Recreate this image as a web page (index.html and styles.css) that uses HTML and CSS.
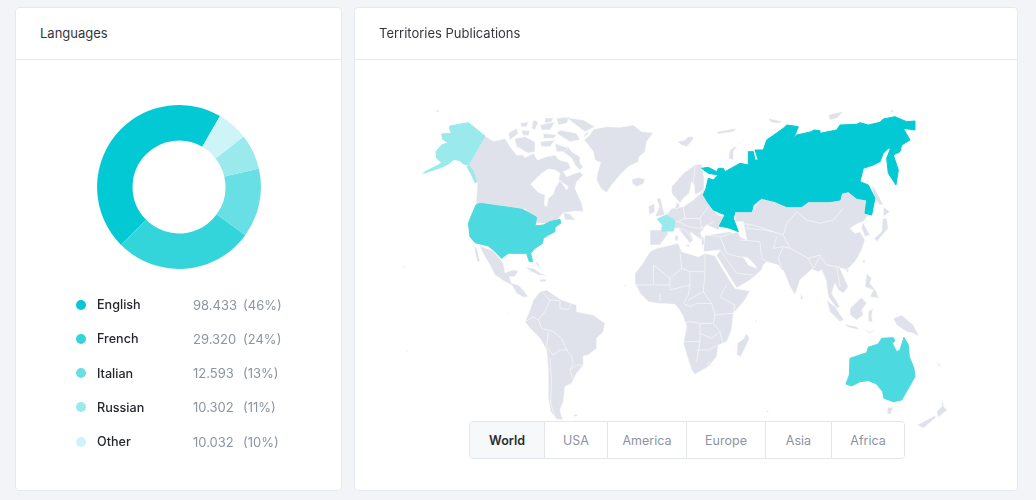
FILE: index.html
```html
<!DOCTYPE html>
<html lang="en">
<head>
<meta charset="utf-8">
<title>Languages and Territories</title>
<link rel="stylesheet" href="styles.css">
</head>
<body>
<main class="dashboard">
  <section class="card card-languages">
    <h2 class="card-title">Languages</h2>
    <div class="languages-body">
      <svg class="donut" viewBox="0 0 164 164" width="164" height="164">
        <g fill="none" stroke-width="35.5">
          <circle class="s1" cx="82" cy="82" r="64.2" pathLength="360" stroke-dasharray="165 360" transform="rotate(135 82 82)"/>
          <circle class="s2" cx="82" cy="82" r="64.2" pathLength="360" stroke-dasharray="99 360" transform="rotate(36 82 82)"/>
          <circle class="s3" cx="82" cy="82" r="64.2" pathLength="360" stroke-dasharray="49 360" transform="rotate(-13 82 82)"/>
          <circle class="s4" cx="82" cy="82" r="64.2" pathLength="360" stroke-dasharray="25 360" transform="rotate(-38 82 82)"/>
          <circle class="s5" cx="82" cy="82" r="64.2" pathLength="360" stroke-dasharray="22 360" transform="rotate(-60 82 82)"/>
        </g>
      </svg>
      <ul class="legend">
        <li class="legend-row"><span class="dot d1"></span><span class="lang">English</span><span class="num">98.433</span><span class="pct">(46%)</span></li>
        <li class="legend-row"><span class="dot d2"></span><span class="lang">French</span><span class="num">29.320</span><span class="pct">(24%)</span></li>
        <li class="legend-row"><span class="dot d3"></span><span class="lang">Italian</span><span class="num">12.593</span><span class="pct">(13%)</span></li>
        <li class="legend-row"><span class="dot d4"></span><span class="lang">Russian</span><span class="num">10.302</span><span class="pct">(11%)</span></li>
        <li class="legend-row"><span class="dot d5"></span><span class="lang">Other</span><span class="num">10.032</span><span class="pct">(10%)</span></li>
      </ul>
    </div>
  </section>
  <section class="card card-map">
    <h2 class="card-title">Territories Publications</h2>
    <div class="map-body">
      <svg class="map" viewBox="355 60 662 430" width="662" height="430">
        <!-- North America, arctic -->
        <g class="land" transform="translate(500 105) scale(.3333)">
          <polygon points="0,105 15,100 30,125 50,150 70,150 75,158 100,145 112,165 140,155 165,150 178,165 205,172 212,190 190,200 200,215 225,205 240,200 250,210 230,230 225,250 245,295 250,320 225,318 190,325 170,345 140,355 110,355 75,312 -72,300 -68,235 -96,180 -45,93 -20,108"/>
          <polygon points="178,125 205,125 215,140 240,155 240,175 250,185 240,195 225,180 215,160 195,145"/>
          <polygon points="45,100 75,95 105,110 105,140 85,145 60,130 50,125 45,110"/>
          <polygon points="25,85 50,70 55,85 30,105"/>
          <polygon points="60,55 85,50 80,65 65,65"/>
          <polygon points="65,75 90,78 85,92 68,90"/>
          <polygon points="100,45 115,50 105,75 95,70"/>
          <polygon points="135,40 160,38 155,50 135,55"/>
          <polygon points="120,60 165,50 150,75 125,75"/>
          <polygon points="170,40 210,35 200,55 175,60"/>
          <polygon points="200,38 250,45 285,65 255,80 235,65"/>
          <polygon points="180,75 230,85 240,105 210,110 185,95 170,85"/>
          <polygon points="120,110 165,105 150,125 125,125"/>
          <polygon points="165,115 205,130 190,140 170,140"/>
          <polygon points="130,85 170,90 160,100 130,100"/>
          <polygon points="255,85 270,80 250,100"/>
          <polygon class="water" points="92,238 125,205 145,192 165,195 180,205 175,225 205,245 200,255 180,225 165,250 160,268 145,280 140,305 133,300 135,270 115,262"/>
          <polygon class="water" points="170,346 190,330 235,322 250,340 215,345 195,350"/>
          <polygon points="190,322 212,328 225,345 195,345"/>
        </g>
        <g class="land" transform="translate(380 90) scale(.3333)">
          <polygon points="612,150 630,135 640,118 680,110 720,112 760,105 785,125 820,128 800,155 795,185 778,200 775,215 745,230 720,255 695,285 680,308 662,295 650,270 652,250 662,218 645,210 640,185 625,165"/>
          <polygon points="755,268 775,262 795,268 790,282 770,290 758,282"/>
          <polygon points="892,155 915,150 925,140 942,140 935,155 920,170 905,165"/>
          <polygon points="168,60 178,60 176,66 170,66"/>
          <polygon points="68,526 78,532 70,534"/>
          <polygon class="hi3" points="210,108 265,98 315,138 265,225 250,222 240,212 222,208 205,222 185,232 130,250 135,245 175,225 185,218 170,205 168,185 185,165 205,158 188,148 185,132 215,130 208,115"/>
          <polygon class="hi3" points="265,225 278,240 290,275 285,278 275,255 262,232"/>
          <polygon class="hi2" points="288,345 300,340 428,358 470,382 465,408 490,405 510,395 540,388 542,400 525,412 525,425 505,435 490,445 488,460 465,475 452,490 458,515 448,515 440,490 415,490 385,490 365,505 345,485 325,468 285,458 270,440 265,400 275,375"/>
        </g>
        <!-- Central America -->
        <g class="land" transform="translate(470 240) scale(.3333)">
          <polygon points="12,12 22,30 30,65 22,65 15,35"/>
          <polygon points="28,18 70,32 85,50 100,70 105,98 122,92 130,90 145,92 135,110 118,110 125,130 145,135 160,150 175,170 160,172 140,160 125,135 100,122 75,105 60,75 45,50"/>
          <polygon points="165,82 190,85 212,100 235,108 205,105 185,95"/>
          <polygon points="208,118 228,118 228,125 210,125"/>
          <polygon points="195,60 205,70 212,88 202,78"/>
        </g>
        <!-- South America -->
        <g class="land" transform="translate(380 270) scale(.3333)">
          <polygon points="480,65 500,60 545,90 590,105 590,125 640,135 675,160 670,185 650,205 650,235 625,255 610,258 610,285 590,310 575,340 555,350 550,395 540,420 548,450 530,448 512,425 505,385 505,300 500,240 480,205 450,175 435,155 450,120 460,90"/>
          <polygon points="580,435 595,432 592,438 582,440"/>
          <polygon points="76,240 85,242 80,246"/>
          <polygon points="380,128 386,128 384,132"/>
          <g class="borders">
            <polyline points="490,70 510,90 495,125 475,150 485,175 505,180 520,185 545,205 560,240 575,260 580,280 570,300 578,325"/>
            <polyline points="505,185 500,230 520,255 540,240 565,240"/>
            <polyline points="510,265 515,330 512,400 525,440"/>
            <polyline points="435,155 460,140 475,150"/>
            <polyline points="510,90 540,92 540,115 565,120 575,100"/>
            <polyline points="570,300 590,285 610,285"/>
          </g>
        </g>
        <!-- Africa -->
        <g class="land" transform="translate(620 235) scale(.3333)">
          <polygon points="90,50 110,40 175,25 185,50 235,65 255,55 285,62 295,80 325,130 345,160 390,168 375,195 340,235 335,285 320,320 295,330 290,365 265,395 225,418 215,405 205,375 190,325 200,275 190,245 175,220 165,208 110,205 85,200 60,175 45,145 45,115 65,90"/>
          <polygon points="380,295 388,310 375,340 362,365 350,360 352,325 370,312"/>
          <polygon points="15,148 20,152 14,155"/>
          <polygon points="405,255 412,258 408,262"/>
          <g class="borders">
            <polyline points="100,90 150,130 185,100 180,50"/>
            <polyline points="100,90 100,150 45,150"/>
            <polyline points="185,100 210,110 255,110 255,55"/>
            <polyline points="210,110 210,150 150,165 150,130"/>
            <polyline points="255,110 250,170 275,205 230,205 210,215 190,205 205,180 210,150"/>
            <polyline points="250,170 205,195"/>
            <polyline points="105,150 150,150"/>
            <polyline points="120,175 120,200"/>
            <polyline points="320,150 300,185 345,210 340,235"/>
            <polyline points="275,205 285,240 280,265 240,265 210,260 195,265"/>
            <polyline points="285,240 340,235"/>
            <polyline points="240,265 240,320 190,320"/>
            <polyline points="240,320 230,380"/>
            <polyline points="240,295 275,310 300,290 280,265"/>
            <polyline points="300,290 310,330"/>
            <polyline points="230,345 270,345 290,330"/>
            <polygon points="262,388 270,382 278,388 270,395"/>
          </g>
        </g>
        <!-- Europe -->
        <g class="land" transform="translate(630 150) scale(.3333)">
          <polygon points="125,110 160,70 195,45 215,42 222,80 222,120 195,135 192,105 185,95 178,130 160,145 150,160 138,145 125,130"/>
          <polygon points="80,145 92,145 100,180 105,195 75,200 88,170"/>
          <polygon points="55,170 72,160 75,185 58,195"/>
          <polygon points="60,240 110,240 115,250 90,285 60,285"/>
          <polygon points="110,195 125,175 160,170 190,150 222,120 240,170 265,195 290,200 275,225 265,240 230,225 210,250 240,285 215,270 180,245 190,270 165,250 145,235 132,235 135,212"/>
          <polygon points="140,155 150,165 145,175 135,175"/>
          <polygon points="145,235 165,240 190,270 180,280 160,255"/>
          <polygon points="235,255 300,245 330,260 330,280 290,285 240,285"/>
          <polygon points="215,255 228,285 215,285"/>
          <polygon points="135,255 145,258 143,272 135,272"/>
          <polygon points="165,284 180,284 175,292"/>
          <g class="borders">
            <polyline points="160,170 165,205 145,215 135,212"/>
            <polyline points="165,205 210,205 235,170"/>
            <polyline points="210,205 215,235 250,215"/>
            <polyline points="145,215 175,230 215,235"/>
            <polyline points="195,48 190,100"/>
          </g>
          <polygon class="hi3" points="82,207 110,195 135,212 132,235 130,243 95,243 97,225"/>
        </g>
        <!-- Asia -->
        <g class="land" transform="translate(740 190) scale(.3333)">
          <polygon points="-15,65 35,65 65,25 105,35 140,50 185,50 205,35 245,35 270,35 300,30 305,10 325,5 350,25 380,30 375,70 385,75 370,95 355,100 330,115 345,130 360,125 375,150 365,180 345,215 320,240 300,235 325,290 310,310 295,300 285,280 275,310 300,350 290,355 265,320 258,270 245,240 235,245 215,238 180,270 165,315 150,290 130,240 125,240 115,225 80,215 70,225 65,240 30,270 -10,294 -70,197 -60,180 -110,185 -105,135 -60,140 -5,125 -15,95"/>
          <polygon class="water" points="-15,95 10,95 20,150 0,140 -5,125"/>
          <polygon class="water" points="10,200 25,225 50,235 45,225 25,205"/>
          <polygon points="368,95 390,135 375,140 365,115"/>
          <polygon points="440,85 445,115 410,155 403,145 425,125 428,85"/>
          <polygon points="430,50 450,65 430,80"/>
          <polygon points="372,205 376,220 368,218"/>
          <polygon points="315,238 328,238 322,248"/>
          <g class="borders">
            <polyline points="170,65 200,90 240,100 280,90 310,55"/>
            <polyline points="170,65 140,100 130,135 150,175 205,205 240,195 260,225 290,230 320,240"/>
            <polyline points="0,100 40,105 100,125 130,135"/>
            <polyline points="30,100 20,115 70,120 100,125"/>
            <polyline points="0,150 60,155 65,205 80,215"/>
            <polyline points="110,140 100,175 130,170 150,175"/>
            <polyline points="130,170 115,205 125,235"/>
            <polyline points="205,205 220,235 240,200"/>
            <polyline points="245,240 258,270"/>
            <polyline points="290,230 300,290"/>
            <polyline points="-60,140 -40,190 -5,200 25,205"/>
            <polyline points="-60,180 -10,250 40,255"/>
          </g>
        </g>
        <!-- Russia and the north -->
        <g class="land" transform="translate(680 90) scale(.3333)">
          <polygon points="195,148 175,160 160,185 160,210 145,205 150,180"/>
          <polygon points="265,85 310,95 290,100 270,95"/>
          <polygon points="445,75 470,68 490,65 470,85 450,90"/>
          <polygon points="110,125 170,115 160,125 115,132"/>
          <polygon points="630,60 645,62 635,68"/>
          <polygon points="720,125 732,125 726,129"/>
          <polygon points="575,285 590,305 610,345 600,345 580,320"/>
          <polygon class="hi1" points="65,235 85,232 110,245 115,235 130,235 135,245 180,220 205,225 205,185 220,185 225,210 235,210 225,180 250,180 260,150 310,115 320,105 355,110 345,135 335,148 350,135 395,125 400,120 420,122 420,130 470,120 480,105 530,103 540,98 565,105 600,97 610,87 645,80 680,95 705,93 705,120 670,115 690,150 665,165 660,185 640,195 655,240 648,285 625,250 620,205 632,175 625,175 610,190 600,215 580,225 550,235 540,275 565,285 585,325 575,375 555,370 560,330 530,325 505,305 485,310 480,330 450,335 425,335 385,335 365,350 320,350 285,335 245,325 220,345 215,365 165,365 160,385 175,425 150,415 118,408 135,375 100,360 85,340 70,315 78,295 85,265 100,270 115,255 85,250"/>
        </g>
        <!-- South East Asia and Oceania -->
        <g class="land" transform="translate(680 270) scale(.3333)">
          <polygon points="440,90 465,110 492,150 480,155 450,125"/>
          <polygon points="490,162 530,170 538,180 505,172"/>
          <polygon points="510,115 545,82 560,100 545,120 550,135 530,150 510,135"/>
          <polygon points="565,125 580,115 575,135 578,155 565,155"/>
          <polygon points="560,10 575,25 570,40 590,65 595,85 570,80 580,60 555,50"/>
          <polygon points="640,145 665,135 700,165 718,200 700,190 680,185 650,165"/>
          <polygon points="550,178 570,185 590,180 570,190"/>
          <polygon points="785,385 792,410 802,420 775,442 770,425 785,410"/>
          <polygon points="768,435 765,445 730,475 712,465 740,450"/>
          <polygon points="622,412 640,412 632,432 622,432"/>
          <polygon points="362,70 370,85 362,90"/>
          <polygon points="772,275 785,290 775,288"/>
          <polygon points="258,420 268,424 262,428"/>
          <polygon class="hi2" points="510,265 560,248 565,232 595,222 605,205 640,203 645,212 637,220 650,245 660,240 672,202 685,225 688,260 702,295 705,320 688,350 665,390 640,395 612,385 608,365 590,342 565,332 540,335 515,348 498,342 508,315"/>
        </g>
      </svg>
      <div class="region-tabs">
        <button class="tab tab-active" type="button">World</button>
        <button class="tab" type="button">USA</button>
        <button class="tab" type="button">America</button>
        <button class="tab" type="button">Europe</button>
        <button class="tab" type="button">Asia</button>
        <button class="tab" type="button">Africa</button>
      </div>
    </div>
  </section>
</main>
</body>
</html>
```

FILE: styles.css
```css
* { box-sizing: border-box; }
html, body { margin: 0; height: 100%; }
body {
  background: #f3f4f8;
  font-family: Inter, "Liberation Sans", sans-serif;
  overflow: hidden;
}
.dashboard {
  display: flex;
  gap: 12px;
  padding: 7px 18px 9px 15px;
  height: 500px;
  filter: blur(.4px);
}
.card {
  background: #fff;
  border: 1px solid #e7e9f0;
  border-radius: 4px;
  display: flex;
  flex-direction: column;
}
.card-languages { width: 327px; }
.card-map { width: 664px; }
.card-title {
  margin: 0;
  height: 52px;
  padding: 0 24px 2px;
  display: flex;
  align-items: center;
  font-size: 13px;
  font-weight: 400;
  color: #33363b;
  border-bottom: 1px solid #e7e9f0;
}
.languages-body {
  display: flex;
  flex-direction: column;
  align-items: center;
  padding-top: 45px;
}
.donut { display: block; }
.s1 { stroke: #03c9d4; }
.s2 { stroke: #34d4db; }
.s3 { stroke: #68dfe5; }
.s4 { stroke: #9ae9ec; }
.s5 { stroke: #cdf4f6; }
.legend {
  list-style: none;
  margin: 18.4px 0 0;
  padding: 0 0 0 60px;
  width: 100%;
  font-size: 13px;
}
.legend-row {
  display: flex;
  align-items: center;
  height: 34.3px;
}
.dot {
  width: 10px;
  height: 10px;
  border-radius: 50%;
  margin-right: 11px;
}
.d1 { background: #03c9d4; }
.d2 { background: #34d4db; }
.d3 { background: #68dfe5; }
.d4 { background: #9ae9ec; }
.d5 { background: #cdf4f6; }
.lang { width: 96px; color: #24272b; font-weight: 500; font-size: 12.6px; }
.num { width: 50px; color: #8c94a1; }
.pct { color: #8c94a1; }
.map-body {
  position: relative;
  flex: 1;
}
.map { display: block; }
.land polygon {
  fill: #dfe2ea;
  stroke: #fff;
  stroke-width: .5;
  stroke-linejoin: round;
  vector-effect: non-scaling-stroke;
}
.land polygon.water { fill: #fff; stroke: #fff; }
.land polygon.hi1 { fill: #03c9d5; stroke: #03c9d5; stroke-width: 1; }
.land polygon.hi2 { fill: #4dd9e0; stroke: #4dd9e0; stroke-width: 1; }
.land polygon.hi3 { fill: #99e9ed; stroke: #99e9ed; stroke-width: 1; }
.borders polyline, .land .borders polygon {
  fill: none;
  stroke: #f5f6f9;
  stroke-width: .8;
  stroke-linejoin: round;
  vector-effect: non-scaling-stroke;
}
.region-tabs {
  position: absolute;
  left: 114px;
  bottom: 31px;
  display: grid;
  grid-template-columns: 74px 63px 79px 79px 66px 73px;
  height: 38px;
  background: #fff;
  border: 1px solid #e3e6ee;
  border-radius: 4px;
  overflow: hidden;
}
.tab {
  padding: 0;
  border: 0;
  border-left: 1px solid #e3e6ee;
  background: #fff;
  font: 400 12.5px Inter, "Liberation Sans", sans-serif;
  color: #8c94a1;
}
.tab:first-child { border-left: 0; }
.tab-active {
  background: #f7f8fa;
  color: #2a2d31;
  font-weight: 600;
}
```
